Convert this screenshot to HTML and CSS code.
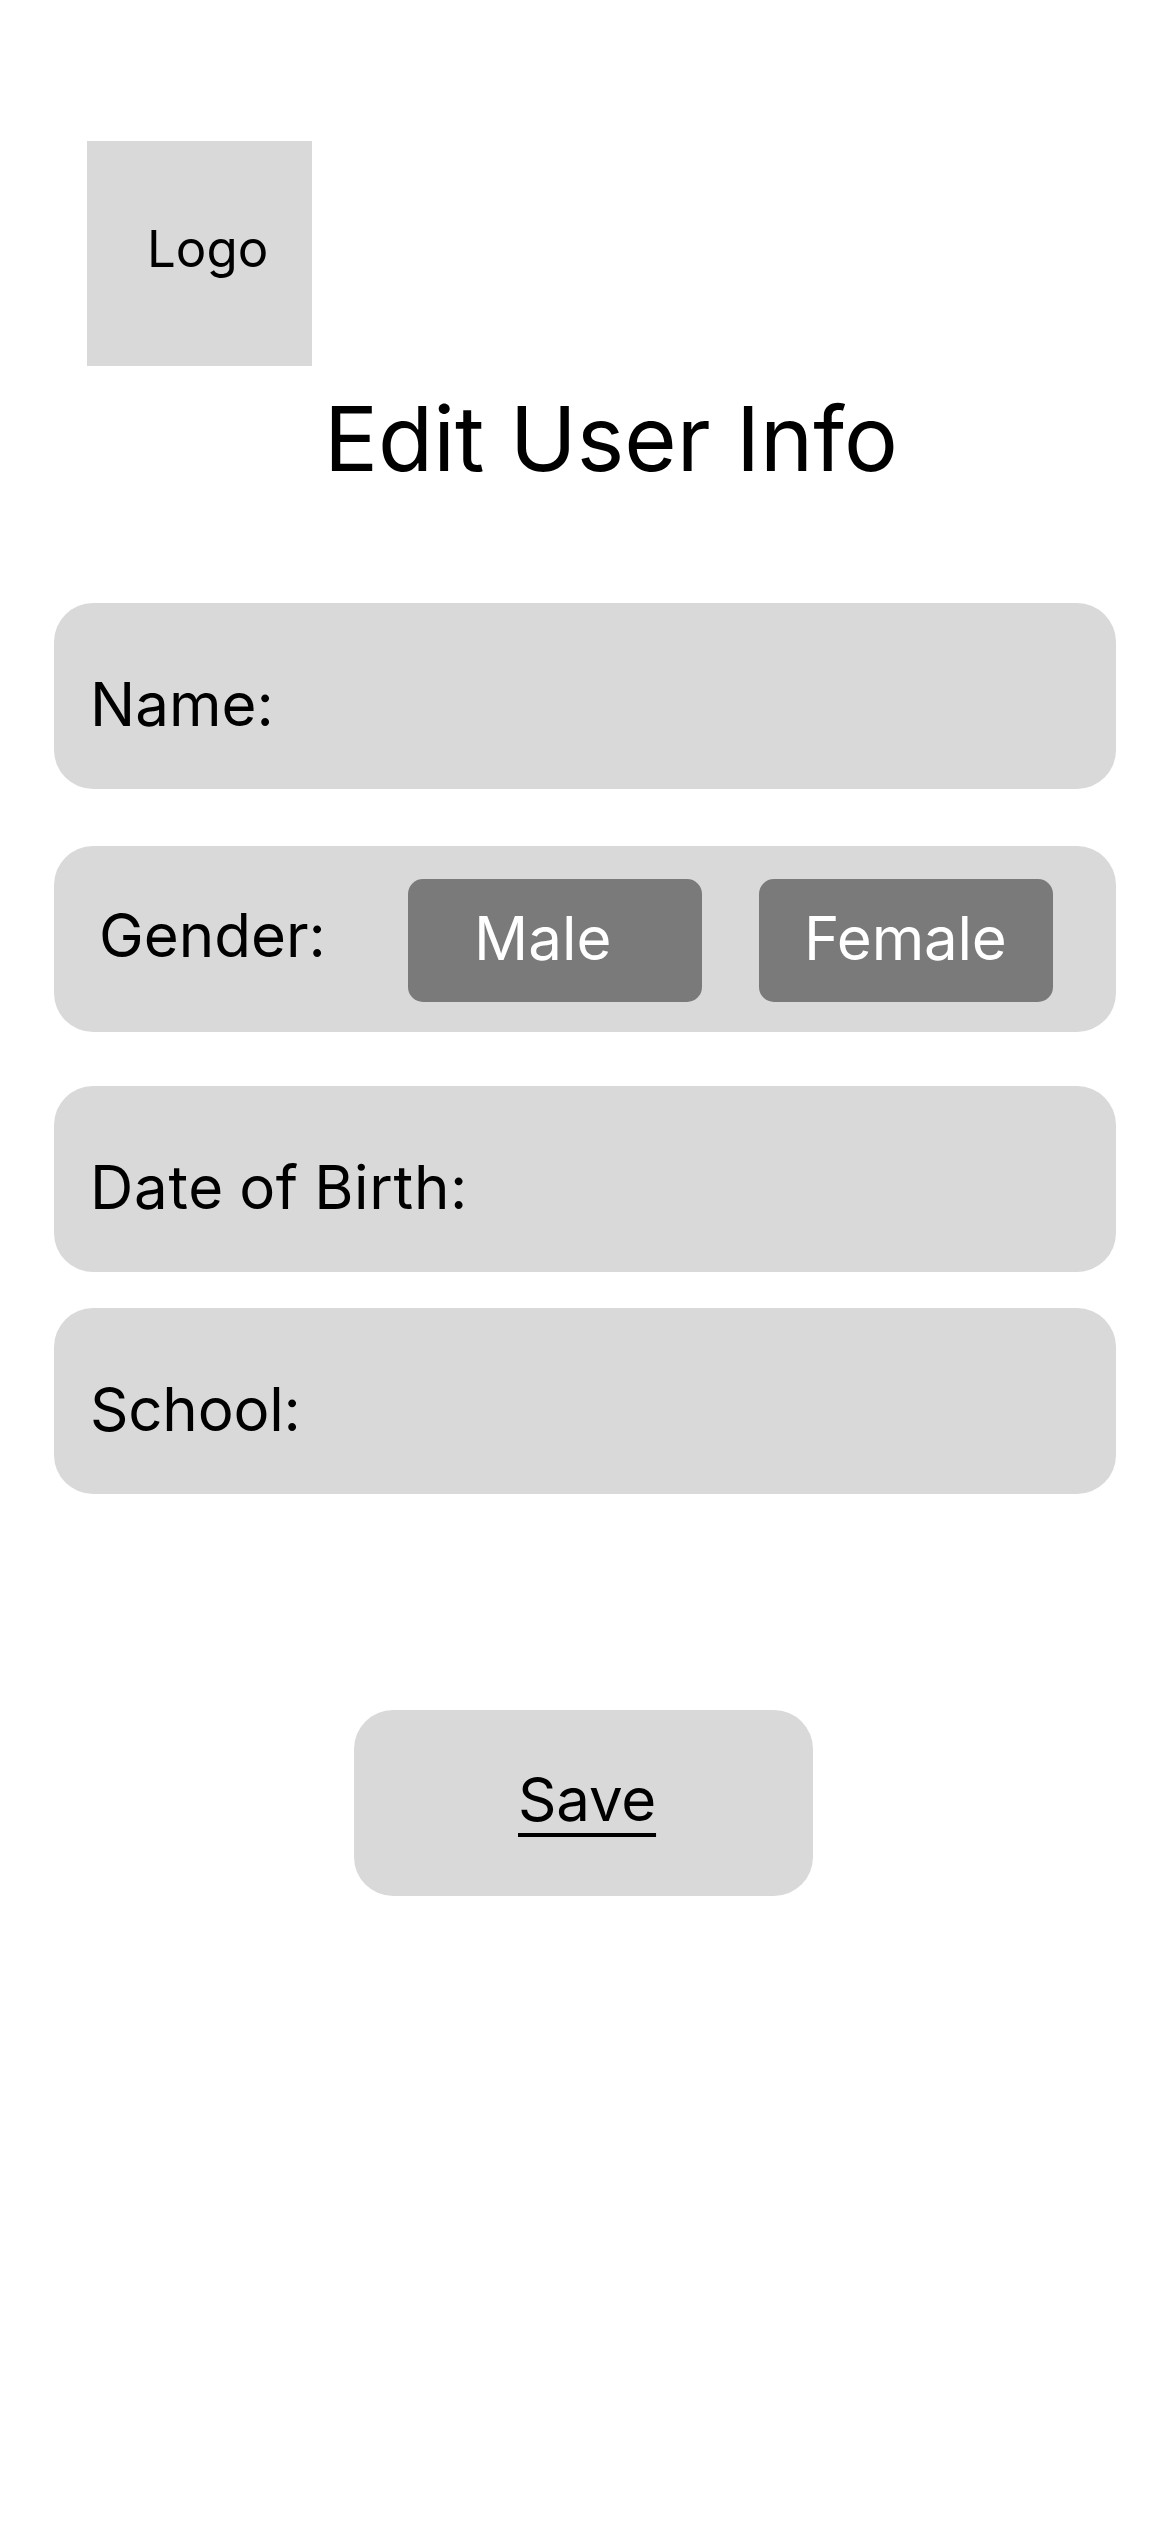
FILE: index.html
```html
<!DOCTYPE html>
<html lang="en">
<head>
<meta charset="utf-8">
<title>Edit User Info</title>
<link rel="stylesheet" href="styles.css">
</head>
<body>
<main class="screen">
  <div class="logo">Logo</div>
  <h1 class="title">Edit User Info</h1>
  <form class="form">
    <div class="field field-name"><span class="label">Name:</span></div>
    <div class="field field-gender">
      <span class="label">Gender:</span>
      <button type="button" class="choice choice-male"><span class="label">Male</span></button>
      <button type="button" class="choice choice-female"><span class="label">Female</span></button>
    </div>
    <div class="field field-birth"><span class="label">Date of Birth:</span></div>
    <div class="field field-school"><span class="label">School:</span></div>
    <button type="button" class="save"><span class="label">Save</span></button>
  </form>
</main>
</body>
</html>
```
FILE: styles.css
```css
* { box-sizing: border-box; }
body { margin: 0; background: #fff; color: #000; font-family: Inter, sans-serif; }
.screen { width: 1170px; height: 2532px; padding-top: 141px; overflow: hidden; }
.logo { width: 225px; height: 225px; margin-left: 87px; padding: 77px 0 0 60px; background: #d9d9d9; font-size: 51px; line-height: 61px; }
.title { margin: 18px 0 0 324px; font-size: 90px; font-weight: 400; line-height: 109px; white-space: nowrap; }
.form { display: flex; flex-direction: column; margin: 110px 54px 0; }
.field { display: flex; align-items: flex-start; height: 186px; padding-left: 36px; border-radius: 39px; background: #d9d9d9; }
.label { font-size: 60px; line-height: 72px; white-space: nowrap; }
.field-name, .field-birth, .field-school { padding-top: 65px; }
.field-gender { margin-top: 57px; padding: 33px 63px 0 45px; }
.field-gender > .label { width: 309px; margin-top: 20px; }
.field-birth { margin-top: 54px; }
.field-birth .label { letter-spacing: 0.7px; word-spacing: -2.2px; }
.field-school { margin-top: 36px; }
.field-school .label { letter-spacing: -0.2px; }
button { display: flex; align-items: flex-start; border: 0; padding: 0; font-family: inherit; }
.choice { width: 294px; height: 123px; border-radius: 15px; background: #7a7a7a; color: #fff; padding-top: 23px; }
.choice-male { padding-left: 66px; }
.choice-female { margin-left: 57px; padding-left: 45px; letter-spacing: -0.2px; }
.save { width: 459px; height: 186px; margin: 216px 0 0 300px; padding: 53px 0 0 164px; border-radius: 39px; background: #d9d9d9; color: #000; letter-spacing: -0.2px; }
.save .label { text-decoration: underline; text-decoration-thickness: 4px; text-underline-offset: 12px; }
```
